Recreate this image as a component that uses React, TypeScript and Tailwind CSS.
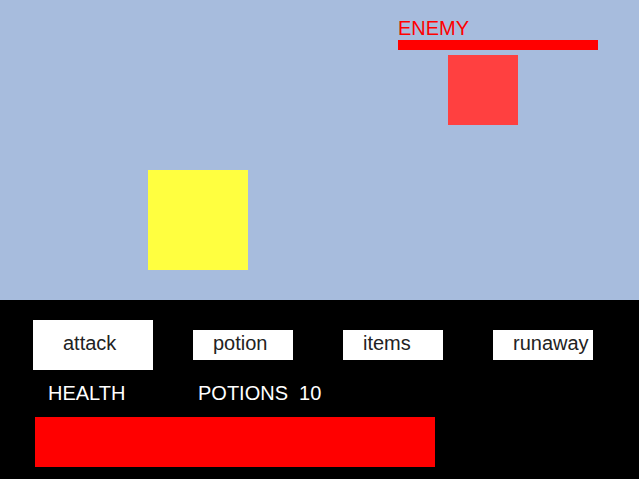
import React from "react";

const buttons = ["potion", "items", "runaway"];

const App: React.FC = () => {
  return (
    <div className="w-[639px] h-[479px] flex flex-col font-['Liberation_Sans',Arial,sans-serif]">
      {/* battle field */}
      <div className="relative h-[300px] bg-[#a7bcdd]">
        <div className="absolute left-[398px] top-[17px] text-[20px] leading-[23px] text-[#ff0000]">ENEMY</div>
        <div className="absolute left-[398px] top-[40px] w-[200px] h-[10px] bg-[#ff0000]" />
        <div className="absolute left-[448px] top-[55px] w-[70px] h-[70px] bg-[#ff4040]" />
        <div className="absolute left-[148px] top-[170px] w-[100px] h-[100px] bg-[#ffff40]" />
      </div>

      {/* menu */}
      <div className="flex-1 bg-black">
        <div className="flex items-center h-[50px] mt-[20px] pl-[33px] gap-[40px]">
          <button className="w-[120px] h-[50px] bg-white text-left pl-[30px] pb-[4px] text-[20px] leading-[23px] text-[#222]">attack</button>
          <div className="flex gap-[50px]">
            {buttons.map((b) => (
              <button key={b} className="w-[100px] h-[30px] bg-white text-left pl-[20px] pb-[4px] text-[20px] leading-[23px] text-[#222]">
                {b}
              </button>
            ))}
          </div>
        </div>
        <div className="flex h-[24px] mt-[11px] text-[20px] leading-[24px] text-white">
          <span className="ml-[48px] w-[150px]">HEALTH</span>
          <span className="whitespace-pre">POTIONS  10</span>
        </div>
        <div className="ml-[35px] mt-[12px] w-[400px] h-[50px] bg-[#ff0000]" />
      </div>
    </div>
  );
};

export default App;
